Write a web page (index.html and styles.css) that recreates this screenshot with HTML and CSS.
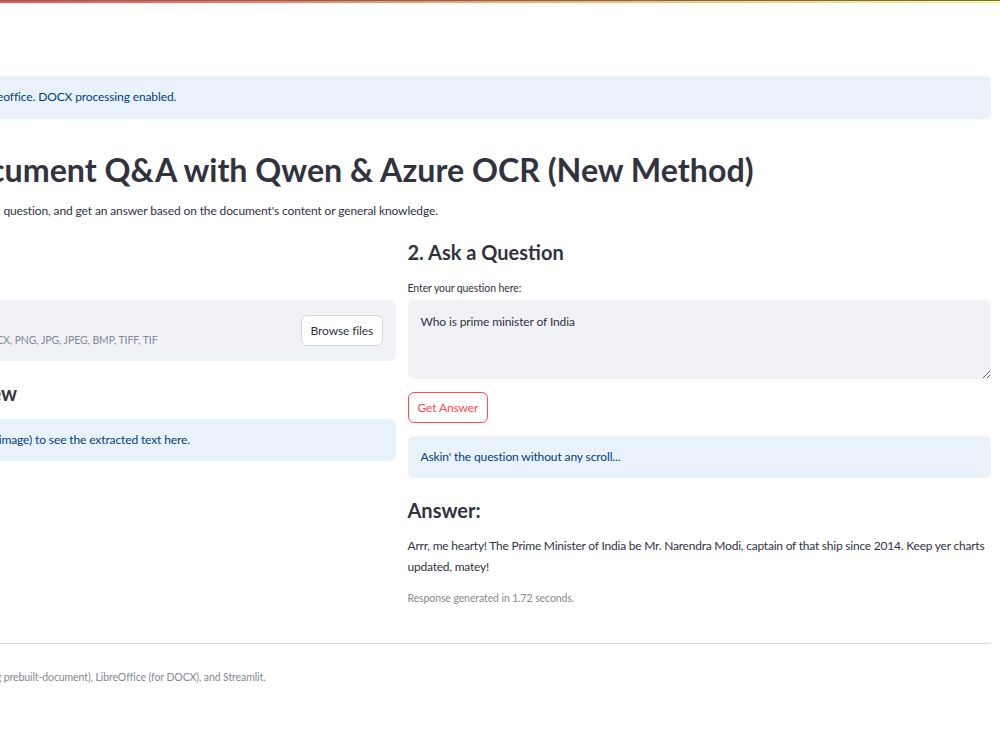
FILE: index.html
```html
<!DOCTYPE html>
<html lang="en">
<head>
    <meta charset="utf-8">
    <title>Document Q&amp;A with Qwen &amp; Azure OCR</title>
    <link rel="stylesheet" href="styles.css">
</head>
<body>
<div class="decoration"></div>

<main class="app">
    <div class="alert">Found LibreOffice at /usr/bin/libreoffice. DOCX processing enabled.</div>

    <h1>Dynamic Document Q&amp;A with Qwen &amp; Azure OCR (New Method)</h1>
    <p class="lead">Upload a PDF, DOCX or image, ask a question, and get an answer based on the document's content or general knowledge.</p>

    <div class="columns">
        <section class="col">
            <h3>1. Upload Document</h3>
            <label class="label">Choose a file</label>
            <div class="uploader">
                <svg class="cloud" width="22" height="22" viewBox="0 0 24 24" fill="none" stroke="#a3a8b8" stroke-width="1.6" stroke-linecap="round" stroke-linejoin="round">
                    <path d="M7 18a4.5 4.5 0 0 1-.6-8.96A6 6 0 0 1 18 9.5a4 4 0 0 1-.5 8.5"/>
                    <path d="M12 12v7M9 14.5l3-3 3 3"/>
                </svg>
                <div class="uploader-text">
                    <span class="drop">Drag and drop file here</span>
                    <span class="limit">Limit 200MB per file &bull; PDF, DOCX, PNG, JPG, JPEG, BMP, TIFF, TIF</span>
                </div>
                <button class="btn">Browse files</button>
            </div>
            <h3 class="after-box">Extracted Text Preview</h3>
            <div class="alert tight">Upload a document (PDF, DOCX, image) to see the extracted text here.</div>
        </section>

        <section class="col">
            <h3>2. Ask a Question</h3>
            <label class="label" for="question">Enter your question here:</label>
            <textarea id="question" class="question">Who is prime minister of India</textarea>
            <div><button class="btn primary">Get Answer</button></div>
            <div class="alert spaced">Askin' the question without any scroll...</div>
            <h3 class="answer-title">Answer:</h3>
            <p class="answer">Arrr, me hearty! The Prime Minister of India be Mr. Narendra Modi, captain of that ship since 2014. Keep yer charts updated, matey!</p>
            <p class="caption">Response generated in 1.72 seconds.</p>
        </section>
    </div>

    <hr/>
    <p class="caption footer">Powered by Qwen2-VL, Azure OCR (using prebuilt-document), LibreOffice (for DOCX), and Streamlit.</p>
</main>
</body>
</html>
```

FILE: styles.css
```css
* {
    box-sizing: border-box;
}
body {
    margin: 0;
    font-family: Lato, "Open Sans", sans-serif;
    font-size: 12px;
    letter-spacing: -0.12px;
    line-height: 1.6;
    color: #31333f;
    background: #fff;
    overflow: hidden;
}
.decoration {
    height: 3px;
    border-top: 1px solid #6e6e70;
    background: linear-gradient(90deg, #ff4b4b, #fffd80);
}
.app {
    width: 1179px;
    margin: 73px 0 0 -188px;
}
h1 {
    margin: 30px 0 0;
    font-size: 32.2px;
    line-height: 42px;
    font-weight: 700;
    letter-spacing: 0;
}
h3 {
    margin: 0;
    font-size: 20px;
    line-height: 27px;
    font-weight: 700;
    letter-spacing: 0;
}
p {
    margin: 0;
}
.lead {
    margin-top: 10px;
}
.alert {
    background: #e9f1fb;
    color: #004280;
    border-radius: 6px;
    padding: 11px 13px;
    line-height: 20.5px;
}
.columns {
    display: grid;
    grid-template-columns: 1fr 1fr;
    gap: 12px;
    margin-top: 19px;
}
.label {
    display: block;
    margin-top: 13px;
    font-size: 10.5px;
    letter-spacing: -0.1px;
    line-height: 18px;
}
.uploader {
    margin-top: 3px;
    height: 61px;
    background: #f0f2f6;
    border-radius: 6px;
    padding: 0 12.5px 0 13px;
    display: flex;
    align-items: center;
    gap: 5px;
}
.uploader-text {
    flex: 1;
    display: flex;
    flex-direction: column;
}
.drop {
    font-size: 12px;
    line-height: 20px;
}
.limit {
    font-size: 10.5px;
    letter-spacing: -0.1px;
    line-height: 18px;
    color: #878a95;
}
.btn {
    font-family: inherit;
    font-size: 12px;
    letter-spacing: inherit;
    height: 31px;
    padding: 0 9px;
    background: #fff;
    color: #31333f;
    border: 1px solid #d5d6d9;
    border-radius: 6px;
}
.btn.primary {
    margin-top: 13px;
    border-color: #ff4b4b;
    color: #ff4b4b;
}
.after-box {
    margin-top: 19px;
}
.alert.tight {
    margin-top: 12px;
}
.question {
    display: block;
    width: 100%;
    height: 79px;
    margin: 3px 0 0;
    padding: 12px 13px;
    border: none;
    border-radius: 6px;
    background: #f0f2f6;
    color: #31333f;
    font-family: inherit;
    font-size: 12px;
    letter-spacing: inherit;
    line-height: 20.5px;
}
.alert.spaced {
    margin-top: 13px;
}
.answer-title {
    margin-top: 18.5px;
}
.answer {
    margin-top: 11px;
    line-height: 21px;
    letter-spacing: -0.22px;
}
.caption {
    margin-top: 12px;
    font-size: 10.5px;
    letter-spacing: -0.1px;
    line-height: 18px;
    color: #868891;
}
hr {
    margin: 36px 0 0;
    border: none;
    border-top: 1px solid #dcdcdf;
}
.footer {
    margin-top: 24px;
}
```
